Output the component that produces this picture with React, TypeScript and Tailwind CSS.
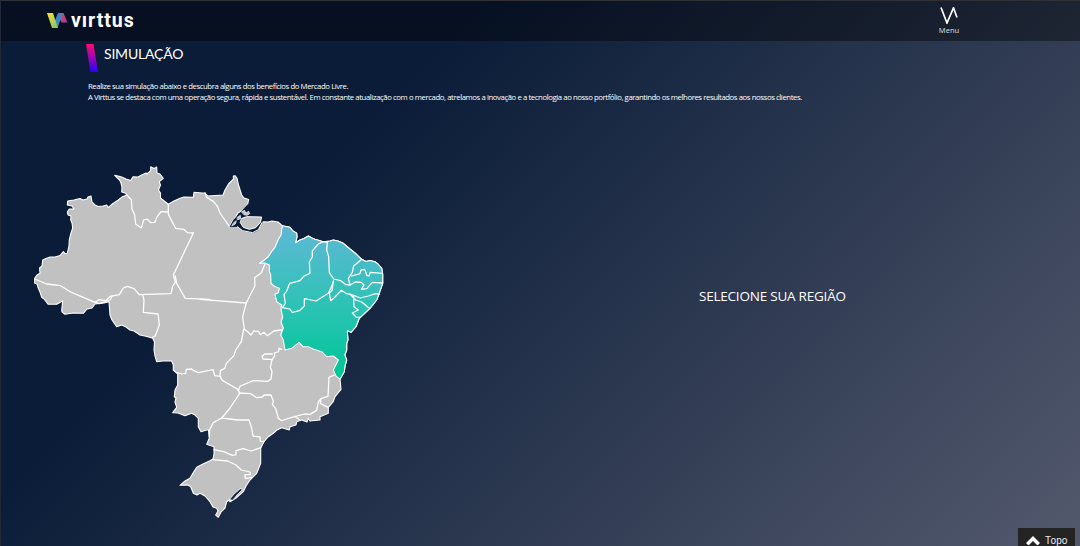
const country =
  "M34.7 278.3L37 275L40 273.3L39.5 268L42 266L42.7 260L46 258.5L50 257L55 257L60 255.5L63.3 251.7L65 253.5L67.3 253.3L69 246L69.3 240L71 233L72.7 228L72 223L70.7 220L71 216L68 215L67.3 212L69.3 209L74 209L72 206L67.3 205L67.7 201L74 200L80 198.5L83 200L87 199L88 197L91 196L92 202L95 205L98.3 206.5L103 206L106.7 205L108.3 207.5L113 203.5L118.3 200L122 197L126.7 195L125 193L121.7 192L122 187L120.7 182L119 179.5L114.7 175.3L118 176L121.7 177L126 179L130.7 180.5L133 176.7L138 177L141.7 175L146 173L147 174L150.7 170.7L150.7 166.7L154 168.5L156.7 167L157 173L160 174L163.3 178.3L159.3 181.7L160.5 185L158.5 190L160.5 193L160.5 198L163 200L168.3 204.3L174 201L180 198.3L184 197L193.3 197.3L194 192.3L205 193.3L208 196L223 195L225 190L228.5 184L233.5 179L233.3 176L235 175.7L237 178L238.5 185L241.7 195L244 198L248.7 199.5L247.7 204L244 209L241.7 210.7L238 213L235 218L232 222L229.3 227.3L234 225L237 224L240 227L241.7 230L246 230L250 232.3L253 231.5L259 229L261 225L263 221.7L268 222L272 221L278 222L282.3 225.7L290 227.3L293 231L296.7 233.3L297 237L295.7 242.7L300 240L304 238.5L308.3 236L312 238L315 239.3L323.3 241.7L330 241L333.3 240L338 241L343.3 243.3L350 249L355 253L361.7 259.3L366 261.5L370 260.5L375 261.7L378 264L381.7 268.3L382.7 274L382.7 283.3L379 294L376.7 300L370 308.3L366 312L359.3 318.3L356 326.7L351 332.3L347.3 330.7L348 340L346.7 343.3L346.7 350L344.8 355L346.7 360L345 366L344.3 371.7L340 379.3L341 389.3L335 396.7L333 402L328.3 407.3L328.3 413.3L320 416.7L320 420L310 421L308.3 418.3L307 422L301.7 420L296.7 421.7L296 425L290 426.7L289.3 430L281.7 427.7L277 430L273.3 433.3L268 437L264 441.7L260.7 448L260.7 463.3L256.7 473.3L250 480L246 486L243.3 491.7L236 498L230 501.7L229 500L226.7 501.7L225 508L221 512L218.3 517.3L215.7 515L218 511L216.7 508.3L213 507L210 501.7L205 496L200 493.3L197 495L193.3 493.3L190.7 486.7L188 485L180 485.3L185 481L190 478.3L193 473L196.7 467.3L203 464L210 460.7L213 459L214 454L214 446.7L206.7 444.3L209.3 438.3L208.5 430L206.7 430L201 431.7L198.3 426.7L198.3 418.3L195 415L191.7 413.3L185 415.7L178 413L172.7 412.7L176.7 407.3L175 402L176 398L174.3 396.7L175 390L177.7 385L177.7 374L173.3 370L173.3 365L171.7 361L163 361L156.7 361.7L155 356L154 350L154.5 342L152.7 338.3L147 336.5L140 335L134 331L130 330L126 327L121.7 325L116.7 326.7L112 320L110 315L109 301.7L104 303L95 304L92 308L87 309L83.3 313.3L73 313L65 314.3L62 312L61.7 310L62.7 300.7L59 303L56.7 304.3L48.3 304.3L44 299L41.7 297.3L40 292L38.3 288.3L37 284L34.7 283.3Z";

const northeast =
  "M282.3 225.7L290 227.3L293 231L296.7 233.3L297 237L295.7 242.7L300 240L304 238.5L308.3 236L312 238L315 239.3L323.3 241.7L330 241L333.3 240L338 241L343.3 243.3L350 249L355 253L361.7 259.3L366 261.5L370 260.5L375 261.7L378 264L381.7 268.3L382.7 274L382.7 283.3L379 294L376.7 300L370 308.3L366 312L359.3 318.3L356 326.7L351 332.3L347.3 330.7L348 340L346.7 343.3L346.7 350L344.8 355L346.7 360L345 366L344.3 371.7L340 379.3L336 376L333.3 370L335 366.7L338.3 360L333.3 356L326.7 356.7L321.7 351.7L313 349L308.3 346.7L303 346.7L299 342.3L291.7 348.3L285 350L283.3 340L280.7 335L283.3 328L281 322L282.7 317L281 309L281.7 305L276.7 301.7L275 294.3L278.3 292.7L279.3 288.3L274 286L271 283.3L270.7 275L269.3 271L269.3 265L265 263L259.3 263.3L263.3 260.7L268.3 256.7L272 251L275 247.3L278 240L281 235Z";

const northBorders = [
  "M14 357L50 372L92 377L122 396L160 412L195 427L207 419L228 422L240 409L268 404L280 384L292 379L312 386L328 404L423 401L428 378L436 367L430 345L490 219",
  "M195 427L208 431L240 420L246 409",
  "M436 348L440 370L454 395L466 415L540 418",
  "M290 105L304 119L306 146L314 165L317 192L334 204L341 180L351 177L362 188L375 187L381 171L393 155L413 156",
  "M415 133L415 163L437 205L462 208L472 218L490 219",
  "M338 404L342 420L340 457L384 462L388 494L376 527L368 532",
];

const coastBorders = [
  "M15 98L20 112L40 124L53 140L60 159L90 202",
  "M195 312L184 338L164 353L165 377L139 428L128 470L133 508L130 512",
  "M0 418L139 429",
  "M133 508L145 517L153 525L161 513L175 514L181 524L192 517L202 527L222 513L244 510",
  "M370 245L355 252L337 273L337 291L328 306L330 340L312 348L300 362L269 370L260 393L252 404L256 430L247 443L269 447L277 457L298 452L313 438L313 416L348 423L385 400L397 374L401 364",
  "M370 245L382 248L380 270L386 290L388 338L401 357L422 362L438 374L450 375L445 355L457 337L461 318L485 298",
  "M455 348L480 341L483 330L494 328L501 347L507 348L511 337L546 340",
  "M450 375L466 366L484 367L492 375L484 388L500 386L517 367L548 369",
  "M400 363L396 391L388 399L392 422L402 414L424 391L440 401L461 406L481 414L505 408L526 401L538 402",
  "M450 402L467 420L485 426L508 445M461 410L462 440L475 450L457 459L469 472L480 472",
];

const southBorders = [
  "M341 -2L334 35L317 60L312 77L289 100L284 115L271 122L270 139L277 151L325 179",
  "M143 128L155 132L167 130L169 118L185 117L190 121L205 128L249 119L254 137L272 139",
  "M325 179L329 190L298 237L275 264L250 278L239 299L238 320",
  "M275 264L324 270L357 270L365 295L369 318L390 321L391 334L402 334",
  "M252 359L281 365L307 376L318 374L318 362L340 356L363 363L393 353",
  "M248 389L293 393L318 405L334 420L360 426L361 434L345 434L346 446L365 442",
];

const eastBorders = [
  "M155 148L147 145L146 155L133 159L134 168L126 179L121 202L126 214L123 237L114 244L70 242L31 258L24 272",
  "M127 162L104 162L96 169L99 177L128 179",
  "M27 279L62 281L80 293L97 291L102 285L123 285L130 304L127 314L137 325L145 355L155 362L183 353L223 342L240 343L260 331L265 306L273 296L294 289L297 232L313 225",
  "M273 297L271 310L295 323M194 349L211 361",
];

const borderGroups = [
  { place: "translate(30 160) scale(.33333)", paths: northBorders },
  { place: "translate(200 160) scale(.33333)", paths: coastBorders },
  { place: "translate(130 330) scale(.33333)", paths: southBorders },
  { place: "translate(230 300) scale(.33333)", paths: eastBorders },
];

function BrazilMap() {
  return (
    <svg className="block h-[364px] w-[360px]" viewBox="30 160 360 364" strokeLinejoin="round" strokeLinecap="round">
      <defs>
        <linearGradient id="ne" x1="0" y1="0" x2="0" y2="1">
          <stop offset="0" stopColor="#5fb8d6" />
          <stop offset="0.5" stopColor="#2fc2b6" />
          <stop offset="0.85" stopColor="#0bc59f" />
          <stop offset="1" stopColor="#00c896" />
        </linearGradient>
      </defs>
      <path d={country} fill="#c1c1c1" stroke="#fff" strokeWidth="1.1" />
      <path d={northeast} fill="url(#ne)" stroke="#fff" strokeWidth="1.1" />
      {borderGroups.map((group) => (
        <g key={group.place} transform={group.place} fill="none" stroke="#fff" strokeWidth="3.800">
          {group.paths.map((d) => (
            <path key={d} d={d} />
          ))}
        </g>
      ))}
      <g transform="translate(200 160) scale(.33333)" stroke="#fff" strokeWidth="2">
        <path d="M88 202L100 180L120 158L143 133L151 150L185 168L188 188L175 211L158 220L128 213L112 200Z" fill="#0b1c38" stroke="none" />
        <path d="M112 200L128 212L158 218L175 209L186 188" fill="none" strokeWidth="3" />
        <path d="M126 175L140 170L185 171L181 188L167 203L148 208L130 202L121 188Z" fill="#c1c1c1" strokeWidth="3" />
        <path d="M125 155L134 151L137 159L146 154L149 161L141 166L132 164ZM112 172L121 166L122 176L113 179ZM101 188L109 182L106 192L96 198Z" fill="#c1c1c1" />
      </g>
      <path d="M229.500 499.500L234 494L241 488L242 490L237 495L233 500Z" fill="#1c2944" stroke="#fff" strokeWidth="0.800" />
    </svg>
  );
}

function Header() {
  return (
    <header className="flex h-[41px] shrink-0 items-start border-t border-[#303036] bg-black/40 pl-[45px]">
      <div className="flex h-10 w-[892px] items-start pt-3">
        <svg className="h-4 w-[22px]" viewBox="0 0 22 16">
          <defs>
            <linearGradient id="leaf" x1="0" y1="0" x2="0.6" y2="1">
              <stop offset="0" stopColor="#ffe03a" />
              <stop offset="1" stopColor="#8fc866" />
            </linearGradient>
            <linearGradient id="wing" x1="0" y1="0" x2="1" y2="1">
              <stop offset="0" stopColor="#e8475f" />
              <stop offset="1" stopColor="#9c3c98" />
            </linearGradient>
          </defs>
          <path d="M15 0H17.500L21.500 9.500H15.500L13.500 5Z" fill="url(#wing)" />
          <path d="M12 0H17L11.500 15H6Z" fill="#3b87c4" />
          <path d="M1 0H7L12 15H6Z" fill="url(#leaf)" />
        </svg>
        <span className="ml-[3px] mt-[-2px] font-['Roboto',sans-serif] text-[19.500px] leading-5 font-bold tracking-[0.95px] text-white">vırttus</span>
      </div>
      <div className="flex w-[22px] flex-col items-center pt-[6px] text-white">
        <svg className="h-[17px] w-[18px]" viewBox="0 0 18 17" fill="none" stroke="white" strokeWidth="1.700">
          <path d="M1 0.500L7 16L13.500 0.800L17 10.500" />
        </svg>
        <span className="mt-px font-['Noto_Sans',sans-serif] text-[7.500px] leading-[10px] text-gray-300">Menu</span>
      </div>
    </header>
  );
}

export default function App() {
  return (
    <div className="flex h-[546px] w-[1080px] flex-col overflow-hidden border-l border-[#20283a] bg-[linear-gradient(135deg,#0a1c38_0%,#0a1c38_30%,#53596d_100%)] text-white">
      <Header />
      <section className="flex h-[63px] shrink-0 flex-col pl-[84px]">
        <div className="flex h-[35px] items-start pt-[2px]">
          <svg className="mt-px h-7 w-[13px]" viewBox="0 0 13 28">
            <defs>
              <linearGradient id="slash" x1="0" y1="0" x2="0" y2="1">
                <stop offset="0" stopColor="#ff0a6c" />
                <stop offset="1" stopColor="#2a00ff" />
              </linearGradient>
            </defs>
            <path d="M1 0H8.500L13 28H5.500Z" fill="url(#slash)" />
          </svg>
          <h1 className="ml-[6px] mt-px font-['Lato',sans-serif] text-[14px] leading-5 tracking-[-0.2px]">SIMULAÇÃO</h1>
        </div>
        <div className="mt-[5px] pl-[3px] font-['Open_Sans',sans-serif] text-[7.750px] leading-[11px] whitespace-nowrap">
          <p className="tracking-[-0.415px]">Realize sua simulação abaixo e descubra alguns dos benefícios do Mercado Livre.</p>
          <p className="tracking-[-0.415px]">
            A Virttus se destaca com uma operação segura, rápida e sustentável. Em constante atualização com o mercado, atrelamos a inovação e a tecnologia ao nosso portfólio, garantindo os melhores resultados aos nossos clientes.
          </p>
        </div>
      </section>
      <main className="flex h-[424px] shrink-0 items-start pt-[56px] pl-[29px]">
        <BrazilMap />
        <p className="ml-[309px] mt-[126px] font-['Open_Sans',sans-serif] text-[13.500px] leading-5 tracking-[-0.22px] whitespace-nowrap">SELECIONE SUA REGIÃO</p>
      </main>
      <a className="absolute top-[528px] left-[1018px] flex h-[18px] w-[57px] items-start overflow-hidden bg-[#242424] pt-[6px] pl-2 font-['Roboto',sans-serif] text-[10px] leading-[14px] text-gray-200">
        <svg className="mt-[2px] mr-[5px] h-[9px] w-[14px]" viewBox="0 0 14 9">
          <path d="M7 0L14 7L11.500 9.500L7 5L2.500 9.500L0 7Z" fill="white" />
        </svg>
        Topo
      </a>
    </div>
  );
}
